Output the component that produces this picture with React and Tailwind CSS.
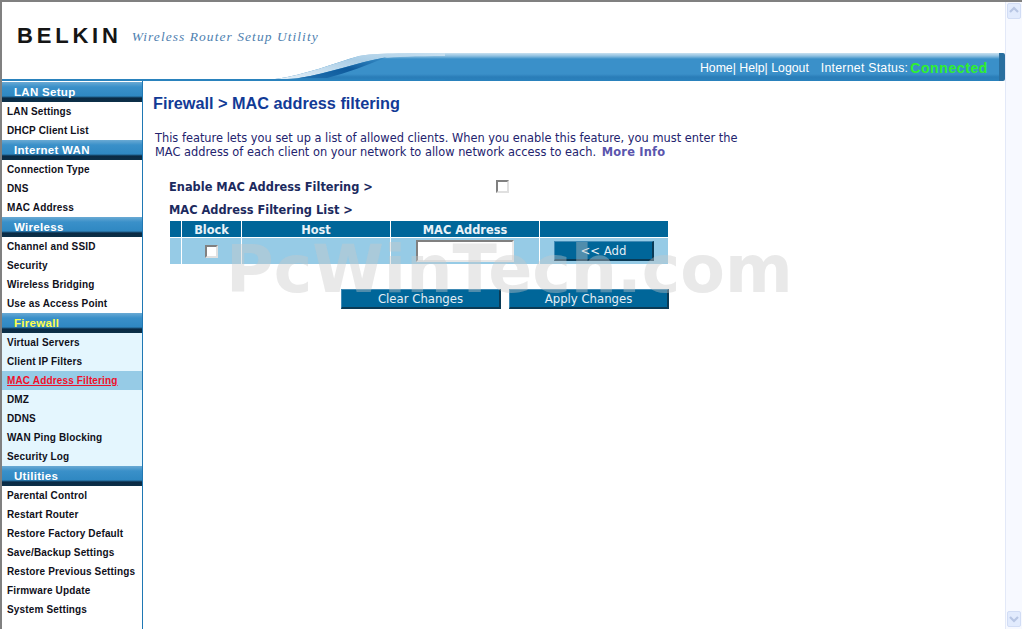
import React from 'react'

const MENU = [
  { title: 'LAN Setup', items: ['LAN Settings', 'DHCP Client List'] },
  { title: 'Internet WAN', items: ['Connection Type', 'DNS', 'MAC Address'] },
  { title: 'Wireless', items: ['Channel and SSID', 'Security', 'Wireless Bridging', 'Use as Access Point'] },
  {
    title: 'Firewall',
    active: true,
    items: ['Virtual Servers', 'Client IP Filters', 'MAC Address Filtering', 'DMZ', 'DDNS', 'WAN Ping Blocking', 'Security Log'],
  },
  {
    title: 'Utilities',
    items: ['Parental Control', 'Restart Router', 'Restore Factory Default', 'Save/Backup Settings', 'Restore Previous Settings', 'Firmware Update', 'System Settings'],
  },
]

const verdana = "font-['DejaVu_Sans',sans-serif]"
const arial = "font-['Liberation_Sans',Arial,sans-serif]"

export default function App() {
  return (
    <div className={`relative h-[629px] w-[1022px] overflow-hidden bg-white ${verdana}`}>
      <div className="flex h-full flex-col border-t-2 border-l-2 border-[#808080]">
        <div className="flex min-h-0 flex-1">
          <div className="flex w-[1003px] flex-col">
            <Header />
            <div className="flex min-h-0 flex-1">
              <Sidebar />
              <Main />
            </div>
          </div>
          <Scrollbar />
        </div>
      </div>

      {/* watermark sits over the page */}
      <div className="pointer-events-none absolute left-[226px] top-[228px] text-[65px] leading-[84px] font-bold whitespace-nowrap text-[#c8c8c8]/40">
        PcWinTech.com
      </div>
    </div>
  )
}

function Header() {
  return (
    <div className="flex h-[79px] shrink-0 flex-col">
      <div className="flex h-[51px] items-start pl-[15px] pt-[21px]">
        <span className={`${arial} text-[22px] leading-[25px] font-bold tracking-[3.8px] text-[#151515]`}>BELKIN</span>
        <span className="pl-[10px] pt-[6px] font-['Liberation_Serif',serif] text-[13.5px] leading-[16px] tracking-[1.05px] text-[#4f7fb0] italic">
          Wireless Router Setup Utility
        </span>
      </div>
      <div className="flex h-[28px] items-stretch">
        <div className="w-[273px] border-b-2 border-[#2a82bd]" />
        <Swoosh />
        <div className="flex flex-1 items-center justify-end rounded-r-[2px] border-r-[6px] border-[#2a6f9f] bg-[linear-gradient(#c9e1f1_0px,#8fc0e0_3px,#3a90c9_6px,#3a90c9_21px,#2a7db8_24px,#2a82bd_28px)] pt-[2px] pr-[11px]">
          <span className={`${arial} text-[12.3px] text-white`}>Home| Help| Logout</span>
          <span className={`${arial} pl-[12px] text-[12.3px] tracking-[0.25px] text-white`}>Internet Status:</span>
          <span className={`${arial} pl-[2px] text-[14px] font-bold tracking-[0.6px] text-[#2ff02f]`}>Connected</span>
        </div>
      </div>
    </div>
  )
}

function Swoosh() {
  return (
    <svg width="170" height="28" viewBox="0 0 170 28" className="block shrink-0">
      <defs>
        <linearGradient id="bar" x1="0" y1="0" x2="0" y2="1">
          <stop offset="0" stopColor="#c9e1f1" />
          <stop offset="0.107" stopColor="#8fc0e0" />
          <stop offset="0.214" stopColor="#3a90c9" />
          <stop offset="0.75" stopColor="#3a90c9" />
          <stop offset="0.857" stopColor="#2a7db8" />
          <stop offset="1" stopColor="#2a82bd" />
        </linearGradient>
        <linearGradient id="light" x1="0" y1="1" x2="1" y2="0">
          <stop offset="0" stopColor="#e4eff7" />
          <stop offset="0.6" stopColor="#a9cde6" />
          <stop offset="1" stopColor="#c9e1f1" />
        </linearGradient>
        <linearGradient id="deep" x1="0" y1="1" x2="1" y2="0">
          <stop offset="0" stopColor="#1f6fae" />
          <stop offset="0.5" stopColor="#0e5a9c" />
          <stop offset="1" stopColor="#3a90c9" />
        </linearGradient>
      </defs>
      {/* white wedge is left bare, only the bar body is drawn */}
      <path d="M0 26 C30 22 60 10 84 3 C100 0 130 0 170 0 L170 28 L0 28 Z" fill="url(#bar)" />
      <path d="M0 26 C30 22 60 10 84 3 C100 0 130 0 170 0 L170 3 C140 3 120 4 108 5 C80 10 55 20 24 25 C16 26 8 26 0 26 Z" fill="url(#light)" />
      <path d="M24 25 C55 20 80 10 112 4 C92 12 72 20 52 25 Z" fill="url(#deep)" />
      <rect x="0" y="26" width="170" height="2" fill="#2a82bd" />
    </svg>
  )
}

function Sidebar() {
  return (
    <div className={`${arial} w-[141px] shrink-0 border-r border-[#1f78b4] pt-px`}>
      {MENU.map((sec) => (
        <div key={sec.title}>
          <div
            className={`flex h-[20px] items-center bg-[linear-gradient(#6aaad4_0px,#3a90c9_5px,#2f88c2_14px,#0a2a44_16px,#0c3048_20px)] pl-[12px] pt-px text-[11.5px] font-bold tracking-[0.3px] ${sec.active ? 'text-[#ffff4d]' : 'text-white'}`}
          >
            {sec.title}
          </div>
          <div className={sec.active ? 'bg-[#e4f6fe]' : 'bg-white'}>
            {sec.items.map((item) => {
              const current = item === 'MAC Address Filtering'
              return (
                <div
                  key={item}
                  className={`flex h-[19px] items-center pl-[5px] text-[10px] font-bold tracking-[0.15px] whitespace-nowrap ${current ? 'bg-[#96cbe6] text-[#f0102a] underline' : 'text-[#10101a]'}`}
                >
                  {item}
                </div>
              )
            })}
          </div>
        </div>
      ))}
    </div>
  )
}

function Main() {
  return (
    <div className="min-w-0 flex-1 pl-[10px]">
      <h1 className={`${arial} pt-[12px] text-[16.25px] leading-[20px] font-bold text-[#123a96]`}>
        Firewall &gt; MAC address filtering
      </h1>
      <p className="pl-[2px] pt-[18px] text-[11.4px] leading-[14px] whitespace-nowrap text-[#23236e]">
        This feature lets you set up a list of allowed clients. When you enable this feature, you must enter the
        <br />
        MAC address of each client on your network to allow network access to each.{' '}
        <span className="ml-[2px] font-bold tracking-[0.2px] text-[#5a55ad]">More Info</span>
      </p>

      <div className="mt-[21px] flex h-[16px] items-center pl-[16px]">
        <span className="w-[327px] text-[11.4px] font-bold text-[#1c2a5e]">Enable MAC Address Filtering &gt;</span>
        <div className="mb-[3px]">
          <Checkbox />
        </div>
      </div>
      <div className="mt-[6px] pl-[16px] text-[11.4px] leading-[16px] font-bold text-[#1c2a5e]">MAC Address Filtering List &gt;</div>

      <div className="ml-[17px] mt-[3px] w-[498px]">
        <div className="grid grid-cols-[11px_59px_148px_148px_128px] gap-x-px text-[11.4px] font-bold text-[#e8f2f8]">
          <div className="h-[16px] bg-[#006699]" />
          <div className="h-[16px] bg-[#006699] text-center leading-[19px]">Block</div>
          <div className="h-[16px] bg-[#006699] text-center leading-[19px]">Host</div>
          <div className="h-[16px] bg-[#006699] text-center leading-[19px]">MAC Address</div>
          <div className="h-[16px] bg-[#006699]" />
        </div>
        <div className="mt-px grid h-[26px] grid-cols-[11px_59px_148px_148px_128px] gap-x-px">
          <div className="bg-[#96cbe6]" />
          <div className="flex items-center justify-center bg-[#96cbe6]">
            <Checkbox />
          </div>
          <div className="bg-[#96cbe6]" />
          <div className="flex items-center justify-center bg-[#96cbe6] pr-px">
            <div className="h-[22px] w-[98px] border-2 border-t-[#808080] border-l-[#808080] border-r-[#e8e8e8] border-b-[#e8e8e8] bg-white" />
          </div>
          <div className="flex items-center justify-center bg-[#96cbe6]">
            <BlueButton className="h-[20px] w-[100px]">&lt;&lt; Add</BlueButton>
          </div>
        </div>
      </div>

      <div className="ml-[188px] mt-[25px] flex gap-[8px]">
        <BlueButton className="h-[20px] w-[160px]">Clear Changes</BlueButton>
        <BlueButton className="h-[20px] w-[160px]">Apply Changes</BlueButton>
      </div>
    </div>
  )
}

function Checkbox() {
  return <div className="h-[13px] w-[13px] border-2 border-t-[#808080] border-l-[#808080] border-r-[#e0e0e0] border-b-[#e0e0e0] bg-white" />
}

function BlueButton({ className, children }) {
  return (
    <div className={`flex items-center justify-center border border-t-[#3f8ab5] border-l-[#3f8ab5] border-r-2 border-b-2 border-r-[#0a3a55] border-b-[#0a3a55] bg-[#006699] pt-[2px] text-[11.7px] text-[#e4eef5] ${className}`}>
      {children}
    </div>
  )
}

function Scrollbar() {
  return (
    <div className="flex w-[17px] shrink-0 flex-col justify-between border-l border-[#e3e9f8] bg-[#f7f9ff] px-px pb-[2px] pt-[1px]">
      <ScrollBtn d="M4 9 L8 5 L12 9" />
      <ScrollBtn d="M4 6 L8 10 L12 6" />
    </div>
  )
}

function ScrollBtn({ d }) {
  return (
    <div className="flex h-[16px] w-[14px] items-center justify-center rounded-[2px] border border-[#d2ddf5] bg-[#e2ebfd]">
      <svg width="12" height="12" viewBox="2 2 12 12">
        <path d={d} fill="none" stroke="#b8c6e4" strokeWidth="2.2" />
      </svg>
    </div>
  )
}
